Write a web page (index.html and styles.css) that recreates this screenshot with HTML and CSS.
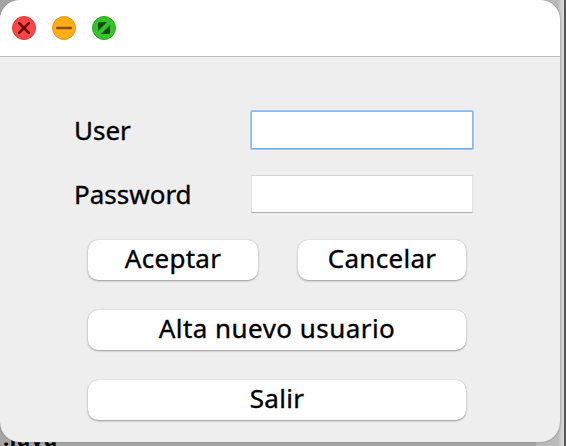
FILE: index.html
```
<!DOCTYPE html>
<html lang="es">
<head>
<meta charset="utf-8">
<title>Login</title>
<link rel="stylesheet" href="styles.css">
</head>
<body>
<div class="behind">.java</div>
<div class="edge"></div>
<main class="window">
  <header class="titlebar">
    <svg class="light" viewBox="0 0 24 24"><circle cx="12" cy="12" r="11.5" fill="#fc4645" stroke="#df3a3b"/><path d="M7 7l10 10M17 7L7 17" stroke="#700607" stroke-width="2.5" stroke-linecap="round"/></svg>
    <svg class="light" viewBox="0 0 24 24"><circle cx="12" cy="12" r="11.5" fill="#fdae17" stroke="#dc9613"/><path d="M5.3 12h13.4" stroke="#8c4b04" stroke-width="2.6" stroke-linecap="round"/></svg>
    <svg class="light" viewBox="0 0 24 24"><circle cx="12" cy="12" r="11.5" fill="#35c428" stroke="#2ba51f"/><path d="M6 15V7.500Q6 6 7.500 6H15zM18 9v7.500q0 1.500-1.500 1.500H9z" fill="#0d4d04"/></svg>
  </header>
  <form class="form">
    <label class="label" for="user">User</label>
    <input class="field focused" id="user" type="text">
    <label class="label password-label" for="password">Password</label>
    <input class="field" id="password" type="password">
  </form>
  <div class="actions">
    <button class="button">Aceptar</button>
    <button class="button">Cancelar</button>
    <button class="button wide spaced">Alta nuevo usuario</button>
    <button class="button wide">Salir</button>
  </div>
</main>
</body>
</html>
```
FILE: styles.css
```
* { box-sizing: border-box; }
body {
  margin: 0;
  width: 566px;
  height: 446px;
  overflow: hidden;
  position: relative;
  background: linear-gradient(90deg, #a5a5a5 0 536px, #bababa 536px 558px, #d0d0d0 558px 564px, #555 564px);
  font-family: "Noto Sans", "Open Sans", sans-serif;
  color: #000;
}
.behind {
  position: absolute;
  left: 3px;
  top: 426px;
  font: bold 22px/22px "Noto Sans", sans-serif;
  letter-spacing: 0.6px;
}
.edge {
  position: absolute;
  left: 558px;
  top: 0;
  width: 6px;
  height: 446px;
  background: linear-gradient(90deg, #bcbcbc, #dadada);
}
.window {
  position: relative;
  width: 560px;
  height: 442px;
  overflow: hidden;
  border-radius: 20px;
  background: #eee;
  box-shadow: 0 0 2px #777;
}
.titlebar {
  display: flex;
  gap: 16px;
  height: 57px;
  padding: 16px 12px;
  background: #fff;
  border-bottom: 1px solid #bfbfbf;
}
.light { width: 24px; height: 24px; }
.form {
  display: grid;
  grid-template-columns: 177px 222px;
  grid-template-rows: 38px 38px;
  row-gap: 26px;
  padding: 54px 0 0 74px;
}
.label {
  font-size: 26px;
  line-height: 38px;
  -webkit-text-stroke: 0.35px #000;
}
.field {
  width: 222px;
  height: 38px;
  padding: 0 6px;
  border: 1px solid #e2e2e2;
  border-top-color: #d5d5d5;
  border-bottom-color: #aaa;
  background: #fff;
  outline: none;
  font: inherit;
}
.focused {
  border-color: #8bb9ec;
  border-bottom-color: #72a7e0;
  border-radius: 1px;
  box-shadow: 0 0 0 1px #9bcaf9;
}
.actions {
  display: grid;
  grid-template-columns: 170px 168px;
  grid-auto-rows: 40px;
  gap: 30px 40px;
  padding: 27px 0 0 88px;
}
.button {
  padding: 0 0 4px;
  border: 0;
  border-radius: 10px;
  background: #fff;
  box-shadow: 0 0 1px #aaa, 0 1px 2px #999;
  font: 26px/36px "Noto Sans", "Open Sans", sans-serif;
  letter-spacing: 0.3px;
  color: #000;
  -webkit-text-stroke: 0.35px #000;
}
.wide { grid-column: span 2; }
.spaced { letter-spacing: 0.45px; }
```
